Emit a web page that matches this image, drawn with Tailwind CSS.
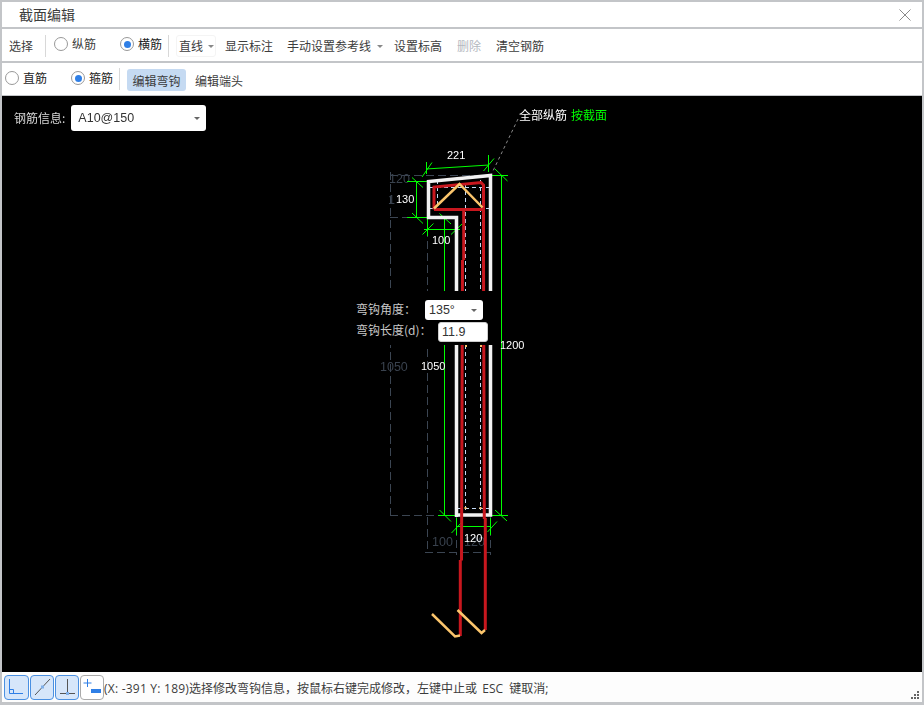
<!DOCTYPE html>
<html lang="zh-CN">
<head>
  <meta charset="UTF-8" />
  <meta name="viewport" content="width=device-width, initial-scale=1" />
  <title>截面编辑</title>
  <script src="https://cdn.jsdelivr.net/npm/@tailwindcss/browser@4"></script>
</head>
<body class="bg-white overflow-hidden font-['Noto_Sans_CJK_SC',sans-serif] text-[12px] text-[#3c3c3c]">
  <div class="w-[924px] h-[705px] flex flex-col border-2 border-b-[3px] border-[#c3c5c8] bg-white">

    <!-- title bar -->
    <div class="h-[25px] box-content shrink-0 flex items-center justify-between pl-[17px] pr-[10px] text-[14px] border-b-2 border-[#c3c5c8]">
      <span>截面编辑</span>
      <svg width="14" height="14" viewBox="0 0 14 14" fill="none" stroke="#8a8a8a" stroke-width="1"><path d="M1.5 1.5 12.5 12.5M12.5 1.5 1.5 12.5"/></svg>
    </div>

    <!-- toolbar 1 -->
    <div class="h-[30px] box-content shrink-0 flex items-center pt-[2px] border-b-2 border-[#c3c5c8]">
      <span class="ml-[7px]">选择</span>
      <div class="w-px h-[22px] bg-[#d8d8d8] ml-[12px]"></div>
      <span class="ml-[8px] mb-[4px] w-[14px] h-[14px] rounded-full border border-[#999] bg-white"></span>
      <span class="ml-[4px] mb-[4px]">纵筋</span>
      <span class="ml-[24px] mb-[4px] w-[14px] h-[14px] rounded-full border border-[#999] bg-white flex items-center justify-center"><span class="w-[7px] h-[7px] rounded-full bg-[#2f7fe6]"></span></span>
      <span class="ml-[4px] mb-[4px] text-[#222]">横筋</span>
      <div class="w-px h-[22px] bg-[#d8d8d8] ml-[6px]"></div>
      <div class="ml-[7px] w-[40px] h-[22px] pl-[2px] rounded-[3px] border border-[#f4f4f4] flex items-center">
        <span>直线</span>
        <span class="ml-[5px] border-x-[3px] border-t-[3px] border-x-transparent border-t-[#888]"></span>
      </div>
      <span class="ml-[9px]">显示标注</span>
      <span class="ml-[14px]">手动设置参考线</span>
      <span class="ml-[6px] border-x-[3px] border-t-[3px] border-x-transparent border-t-[#888]"></span>
      <span class="ml-[11px]">设置标高</span>
      <span class="ml-[15px] text-[#b4b8c0]">删除</span>
      <span class="ml-[15px]">清空钢筋</span>
    </div>

    <!-- toolbar 2 -->
    <div class="h-[32px] shrink-0 flex items-center">
      <span class="ml-[3px] mb-[2px] w-[14px] h-[14px] rounded-full border border-[#999] bg-white"></span>
      <span class="ml-[4px] mb-[2px] text-[#222]">直筋</span>
      <span class="ml-[24px] mb-[2px] w-[14px] h-[14px] rounded-full border border-[#999] bg-white flex items-center justify-center"><span class="w-[7px] h-[7px] rounded-full bg-[#2f7fe6]"></span></span>
      <span class="ml-[4px] mb-[2px] text-[#222]">箍筋</span>
      <div class="w-px h-[22px] bg-[#d8d8d8] ml-[6px]"></div>
      <span class="ml-[7px] mt-[2px] pt-px h-[22px] w-[59px] rounded-[3px] bg-[#c5daf2] flex items-center justify-center">编辑弯钩</span>
      <span class="ml-[9px] mt-[3px]">编辑端头</span>
    </div>

    <!-- canvas -->
    <div class="relative flex-1 bg-black border-t border-[#c3c5c8] overflow-hidden">
      <svg class="absolute left-0 top-0 will-change-transform" width="920" height="577" viewBox="2 96 920 577" fill="none" font-family="'Liberation Sans','Noto Sans CJK SC',sans-serif" font-size="11">
        <!-- ghost dims -->
        <g stroke="#3b4552" stroke-width="1" stroke-dasharray="8 4">
          <path d="M390.5 172V516M427.5 217V552M390 175.5H500M390 217.5H428M390 515.5H457M425 552.5H491M456.5 516V555M490.5 516V555"/>
        </g>
        <g fill="#39424e" font-size="12.5">
          <text x="389" y="183">120</text>
          <text x="388" y="204">1</text>
          <text x="380" y="371">1050</text>
          <text x="432" y="546">100</text>
          <text x="464" y="546">120</text>
        </g>
        <!-- dashed guides -->
        <g stroke="#c4d9f3" stroke-width="1" stroke-dasharray="4 3">
          <path d="M437.5 180V208M465.5 184V510M480.5 180V510M430 187.5H490M430 208.5H490M458 508.5H490"/>
        </g>
        <path d="M465 345h2v2h-2zM480 345h2v2h-2zM464.5 507h2v2h-2zM479.5 507h2v2h-2z" fill="#fbc56c"/>
        <!-- leader -->
        <path d="M518 119 492 173" stroke="#8a8a8a" stroke-dasharray="3 3"/>
        <!-- green dims -->
        <g stroke="#00ff00" stroke-width="1">
          <path d="M444.5 217V516M501.5 175V516M416.5 181V217M407 181.5H428M407 217.5H428M437 217.5H455M426 169 489 165M426.5 162V174M488.5 155V172M427.5 218V236M456.5 218V238M424 229.5H460M438 515.5H456M492 515.5H508M492 175.5H508M456.5 518V535M490.5 518V535M457 526.5H490"/>
          <path d="M412 177.5 423 187.5M412 213 423 223.5M422 177 432 162.5M483.5 171 494 158.5M422.5 234.5 433.5 223.5M451 234.5 462 224M439.5 213.5 451 224M495 169 507.5 181M439.5 510 451 521.5M495 510 507 521M451.5 533 461.5 522.5M487.5 532 497 521.5"/>
        </g>
        <!-- white section outline -->
        <path d="M456.5 517V217.5H428.5V181.5L490.5 175.5V515H456.5" stroke="#f2f2f2" stroke-width="3.5"/>
        <!-- red bars -->
        <g stroke="#c8171e" stroke-width="3">
          <path d="M434 209.5V187L481 182.5L483.5 185V260L484.3 519M434 209.5H483M463.7 210V260M462.500 260 461.5 560.5M460.3 560V636M485.3 518V630"/>
        </g>
        <!-- hooks -->
        <g stroke="#fbc56c" stroke-width="2.5">
          <path d="M434 208.5 459.5 184 482.5 207.5"/>
          <path d="M432 614 455 636.5 460 635.5M457.5 610 481.5 633 485 630"/>
        </g>
        <!-- labels -->
        <g fill="#fff">
          <text x="447" y="159">221</text>
          <text x="396" y="203">130</text>
          <text x="432" y="244">100</text>
          <text x="421" y="370">1050</text>
          <text x="500" y="349">1200</text>
          <text x="464" y="542">120</text>
        </g>
        <text x="519" y="120" fill="#fff" font-size="12">全部纵筋</text>
        <text x="571" y="120" fill="#00ff00" font-size="12">按截面</text>
      </svg>

      <!-- rebar info -->
      <div class="absolute left-[12px] top-[9px] h-[26px] flex items-center text-[#d8d8d8]">
        <span>钢筋信息:</span>
        <div class="ml-[6px] w-[135px] h-[26px] rounded-[3px] bg-white text-[#333] flex items-center justify-between pl-[7px] pr-[6px]">
          <span class="font-['Liberation_Sans'] text-[12.5px]">A10@150</span>
          <span class="border-x-[3px] border-t-[3px] border-x-transparent border-t-[#666]"></span>
        </div>
      </div>

      <!-- hook editor popup -->
      <div class="absolute left-[350px] top-[195px] w-[148px] h-[54px] bg-black text-[#c8c8c8]">
        <div class="absolute left-[4px] top-[9px] font-['Noto_Sans_CJK_TC']">弯钩角度：</div>
        <div class="absolute left-[73px] top-[9px] w-[58px] h-[20px] rounded-[3px] bg-white text-[#333] flex items-center justify-between pl-[4px] pr-[6px]">
          <span class="font-['Liberation_Sans'] text-[12.5px]">135°</span>
          <span class="border-x-[3px] border-t-[3px] border-x-transparent border-t-[#666]"></span>
        </div>
        <div class="absolute left-[4px] top-[30px] font-['Noto_Sans_CJK_TC']">弯钩长度(d)：</div>
        <div class="absolute left-[86px] top-[31px] w-[50px] h-[20px] rounded-[3px] bg-white border border-[#ccc] text-[#333] flex items-center pl-[3px]">
          <span class="font-['Liberation_Sans'] text-[12.5px]">11.9</span>
        </div>
      </div>
    </div>

    <!-- status bar -->
    <div class="h-[30px] shrink-0 relative flex items-center pl-[2px] bg-[#fdfdfd]">
      <div class="w-[25px] h-[25px] rounded-[4px] border border-[#4a90e2] bg-[#d6e6fa] flex items-center justify-center">
        <svg width="19" height="19" viewBox="0 0 19 19" fill="none" stroke="#2f7fe6"><path d="M2.5 1V15.5H16M2.5 11.5H6.5V15.5"/></svg>
      </div>
      <div class="ml-px w-[24px] h-[25px] rounded-[4px] border border-[#4a90e2] bg-[#d6e6fa] flex items-center justify-center">
        <svg width="19" height="19" viewBox="0 0 19 19" fill="none"><path d="M2 17 17 1" stroke="#555"/><rect x="8" y="7.5" width="3" height="3" fill="#7fb0ea"/></svg>
      </div>
      <div class="ml-px w-[24px] h-[25px] rounded-[4px] border border-[#4a90e2] bg-[#d6e6fa] flex items-center justify-center">
        <svg width="19" height="19" viewBox="0 0 19 19" fill="none"><path d="M9.5 1V15M2 15.5H17" stroke="#555"/><rect x="8" y="14" width="3" height="3" fill="#7fb0ea"/></svg>
      </div>
      <div class="ml-px w-[24px] h-[25px] rounded-[4px] border border-[#aaa] bg-white flex items-center justify-center">
        <svg width="19" height="19" viewBox="0 0 19 19" fill="none"><path d="M4.5 1V9M0.5 5H8.5" stroke="#2f7fe6"/><rect x="8" y="11" width="10" height="4" fill="#2f7fe6"/></svg>
      </div>
      <span class="mt-[3px] font-['Open_Sans','Noto_Sans_CJK_TC',sans-serif] whitespace-pre"><span class="tracking-[0.23px]">(X: -391 Y: 189)</span>选择修改弯钩信息，按鼠标右键完成修改，左键中止或<span class="ml-[2px] mr-[3px]"> ESC </span>键取消;</span>
      <svg class="absolute right-[2px] bottom-[2px]" width="9" height="9" viewBox="0 0 9 9" fill="#666"><path d="M6 0h2v2H6zM3 3h2v2H3zM6 3h2v2H6zM0 6h2v2H0zM3 6h2v2H3zM6 6h2v2H6z"/></svg>
    </div>
  </div>
</body>
</html>
